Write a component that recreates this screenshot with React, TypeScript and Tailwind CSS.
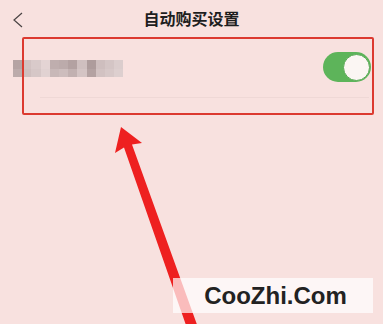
import React from "react";

const mosaic: [string, string][] = [
  ["#b5a3a3", "#bcabab"],
  ["#d2c2c2", "#cfbfbf"],
  ["#d9caca", "#d6c7c7"],
  ["#e4d4d4", "#e1d2d2"],
  ["#bfaeae", "#c8b8b8"],
  ["#bcabab", "#cdbdbd"],
  ["#b3a1a1", "#c2b1b1"],
  ["#cfbfbf", "#d4c4c4"],
  ["#ae9c9c", "#b4a2a2"],
  ["#cebebe", "#d2c2c2"],
  ["#d4c5c5", "#d7c8c8"],
  ["#dbcdcd", "#ddcfcf"],
];

export default function App() {
  return (
    <div
      className="relative w-[383px] h-[324px] overflow-hidden bg-[#f8e1df]"
      style={{ fontFamily: '"Liberation Sans", "Noto Sans CJK SC", sans-serif' }}
    >
      {/* header */}
      <div className="relative flex h-[37px] items-center justify-center">
        <svg
          className="absolute left-[12px] top-[12px]"
          width="12"
          height="16"
          viewBox="0 0 12 16"
        >
          <path d="M10 1 L2 8 L10 15" fill="none" stroke="#4a4444" strokeWidth="1.2" />
        </svg>
        <span className="text-[16px] font-semibold text-[#1e1e1e] leading-none mt-[2px]">
          自动购买设置
        </span>
      </div>

      {/* row */}
      <div className="flex h-[60px] items-center justify-between pl-[13px] pr-[12px]">
        <div className="flex mt-[3px] blur-[0.6px]">
          {mosaic.map((c, i) => (
            <div key={i} className="flex flex-col">
              <div className="w-[9.2px] h-[8.5px]" style={{ backgroundColor: c[0] }} />
              <div className="w-[9.2px] h-[8.5px]" style={{ backgroundColor: c[1] }} />
            </div>
          ))}
        </div>
        <div className="flex h-[30px] w-[48px] items-center justify-end rounded-full bg-[#5db45a] pr-[1px]">
          <div className="h-[27px] w-[27px] rounded-full border border-[#58a955] bg-[#fbf6f3]" />
        </div>
      </div>
      <div className="ml-[40px] mr-[14px] h-px bg-[#efd8d6]" />

      {/* annotation box */}
      <div className="absolute left-[22px] top-[37px] h-[78px] w-[352px] rounded-[2px] border-2 border-[#dc3a30]" />

      {/* arrow */}
      <svg className="absolute left-0 top-0" width="383" height="324" viewBox="0 0 383 324">
        <polygon
          points="121,127 142,143 132,144.4 197.5,326 187.5,329.5 124,147.4 115,153"
          fill="#ee2020"
        />
      </svg>

      {/* watermark */}
      <div className="absolute left-[173px] top-[278px] flex h-[35px] w-[200px] items-center justify-center bg-[#ffffff]/70">
        <span className="text-[24px] font-bold leading-none text-[#222] ml-[5px]">CooZhi.Com</span>
      </div>
    </div>
  );
}
